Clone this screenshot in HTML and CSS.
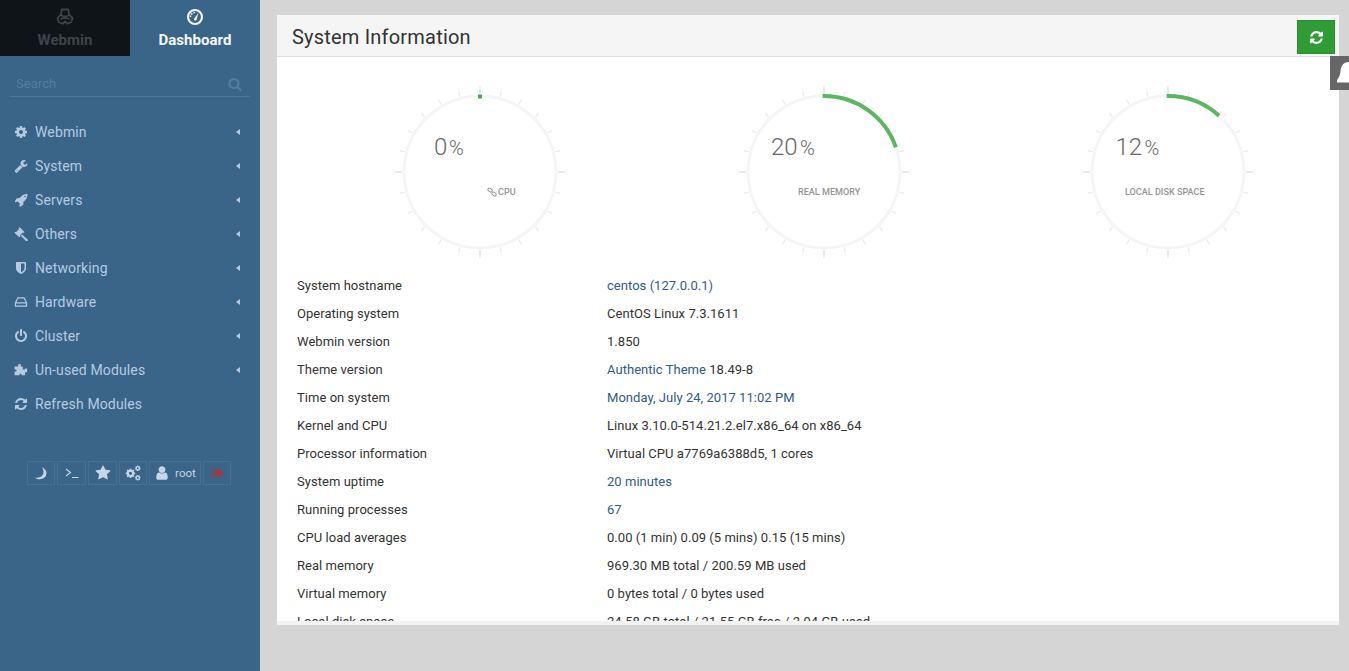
FILE: index.html
```html
<!DOCTYPE html>
<html lang="en">
<head>
<meta charset="utf-8">
<title>System Information</title>
<link rel="stylesheet" href="styles.css">
</head>
<body>
<svg class="defs" aria-hidden="true">
  <symbol id="i-cog" viewBox="0 0 1792 1792"><path d="M1152 896q0-106-75-181t-181-75-181 75-75 181 75 181 181 75 181-75 75-181zm512-109v222q0 12-8 23t-20 13l-185 28q-19 54-39 91 35 50 107 138 10 12 10 25t-9 23q-27 37-99 108t-94 71q-12 0-26-9l-138-108q-44 23-91 38-16 136-29 186-7 28-36 28h-222q-14 0-24.500-8.500t-11.500-21.500l-28-184q-49-16-90-37l-141 107q-10 9-25 9-14 0-25-11-126-114-165-168-7-10-7-23 0-12 8-23 15-21 51-66.500t54-70.500q-27-50-41-99l-183-27q-13-2-21-12.500t-8-23.500v-222q0-12 8-23t19-13l186-28q14-46 39-92-40-57-107-138-10-12-10-24 0-10 9-23 26-36 98.500-107.500t94.500-71.500q13 0 26 10l138 107q44-23 91-38 16-136 29-186 7-28 36-28h222q14 0 24.500 8.500t11.500 21.500l28 184q49 16 90 37l142-107q9-9 24-9 13 0 25 10 129 119 165 170 7 8 7 22 0 12-8 23-15 21-51 66.500t-54 70.500q26 50 41 98l183 28q13 2 21 12.500t8 23.500z"/></symbol>
  <symbol id="i-wrench" viewBox="0 0 1792 1792"><path d="M448 1472q0-26-19-45t-45-19-45 19-19 45 19 45 45 19 45-19 19-45zm644-420l-682 682q-37 37-90 37-52 0-91-37l-106-108q-38-36-38-90 0-53 38-91l681-681q39 98 114.500 173.500t173.500 114.500zm634-435q0 39-23 106-47 134-164.500 217.500t-258.500 83.500q-185 0-316.500-131.500t-131.500-316.500 131.500-316.500 316.500-131.500q58 0 121.500 16.500t107.500 46.500q16 11 16 28t-16 28l-293 169v224l193 107q5-3 79-48.500t135.500-81 70.500-35.500q15 0 23.500 10t8.500 25z"/></symbol>
  <symbol id="i-rocket" viewBox="0 0 1792 1792"><path d="M1504 448q0-40-28-68t-68-28-68 28-28 68 28 68 68 28 68-28 28-68zm224-288q0 249-75.500 430.500t-253.500 360.500q-81 80-195 176l-20 379q-2 16-16 26l-384 224q-7 4-16 4-12 0-23-9l-64-64q-13-14-8-32l85-276-281-281-276 85q-3 1-9 1-14 0-23-9l-64-64q-17-19-5-39l224-384q10-14 26-16l379-20q96-114 176-195 188-187 358-258t431-71q14 0 24 9.500t10 22.500z"/></symbol>
  <symbol id="i-gavel" viewBox="1 1 22 22"><path d="M10 1.500l7.500 7.500-1.700 1.700-.9-.9-4.600 4.600.9.900-1.700 1.700L1.500 10l1.700-1.700.9.900 4.600-4.600-.9-.9zM13.600 12.600l8.700 8.200a1.600 1.600 0 0 1-2.300 2.300l-8.400-8.500z"/></symbol>
  <symbol id="i-shield" viewBox="0 0 1792 1792"><path d="M1344 960v-640h-448v1137q119-63 213-137 235-184 235-360zm192-768v768q0 86-33.500 170.500t-83 150-118 127.500-126.500 103-121 77.500-89.500 49.500-42.500 20q-12 6-26 6t-26-6q-16-7-42.500-20t-89.500-49.500-121-77.500-126.500-103-118-127.500-83-150-33.500-170.500v-768q0-26 19-45t45-19h1152q26 0 45 19t19 45z"/></symbol>
  <symbol id="i-hdd" viewBox="0 0 24 24"><path fill-rule="evenodd" d="M6 4h12l4.500 9v7h-21v-7zm1.200 2L4 12.500h16L16.800 6zM3.500 14.500V18h17v-3.500z"/></symbol>
  <symbol id="i-power" viewBox="0 0 1792 1792"><path d="M1664 896q0 156-61 298t-164 245-245 164-298 61-298-61-245-164-164-245-61-298q0-182 80.500-343t226.500-270q43-32 95.500-25t83.500 50q32 42 24.500 94.500t-49.500 84.500q-98 74-151.500 181t-53.500 228q0 104 40.500 198.500t109.500 163.500 163.500 109.500 198.500 40.500 198.500-40.500 163.500-109.500 109.500-163.500 40.500-198.500q0-121-53.500-228t-151.500-181q-42-32-49.500-84.500t24.500-94.500q31-43 84-50t95 25q146 109 226.500 270t80.500 343zm-640-768v640q0 52-38 90t-90 38-90-38-38-90v-640q0-52 38-90t90-38 90 38 38 90z"/></symbol>
  <symbol id="i-puzzle" viewBox="0 0 24 24"><path d="M7 4a2.500 2.500 0 0 1 5 0c0 .9-.5 1.300-.5 2H15v5h4v-1.500h3.500V16H19v5h-6v-1.500a1.800 1.800 0 0 0-3.500 0V21H1v-6.500h2a1.800 1.800 0 0 0 0-3.500H1V6h6.500C7.500 5.300 7 4.900 7 4z"/></symbol>
  <symbol id="i-refresh" viewBox="0 0 1792 1792"><path d="M1639 1056q0 5-1 7-64 268-268 434.500t-478 166.500q-146 0-282.500-55t-243.500-157l-129 129q-19 19-45 19t-45-19-19-45v-448q0-26 19-45t45-19h448q26 0 45 19t19 45-19 45l-137 137q71 66 161 102t187 36q134 0 250-65t186-179q11-17 53-117 8-23 30-23h192q13 0 22.500 9.500t9.500 22.500zm25-800v448q0 26-19 45t-45 19h-448q-26 0-45-19t-19-45 19-45l138-138q-148-137-349-137-134 0-250 65t-186 179q-11 17-53 117-8 23-30 23h-199q-13 0-22.500-9.500t-9.500-22.500v-7q65-268 270-434.500t480-166.500q146 0 284 55.500t245 156.500l130-129q19-19 45-19t45 19 19 45z"/></symbol>
  <symbol id="i-moon" viewBox="0 0 24 24"><path d="M12.500 1.500C18 6 18 15 10.500 19 7.500 20.500 4 20.500 1.500 19.500 5 23 10.500 24 15.500 21.500 23.500 17.500 24 5.500 12.500 1.500z"/></symbol>
  <symbol id="i-star" viewBox="0 0 1792 1792"><path d="M1728 647q0 22-26 48l-363 354 86 500q1 7 1 20 0 21-10.500 35.500t-30.500 14.500q-19 0-40-12l-449-236-449 236q-22 12-40 12-21 0-31.500-14.500t-10.500-35.500q0-6 2-20l86-500-364-354q-25-27-25-48 0-37 56-46l502-73 225-455q19-41 49-41t49 41l225 455 502 73q56 9 56 46z"/></symbol>
  <symbol id="i-user" viewBox="0 0 1792 1792"><path d="M1536 1399q0 109-62.500 187t-150.500 78h-854q-88 0-150.500-78t-62.500-187q0-85 8.500-160.500t31.500-151.500 58.500-130 94-88.500 134.500-34.500q131 128 313 128t313-128q76 0 134.500 34.500t94 88.500 58.500 130 31.500 151.500 8.500 160.500zm-256-887q0 159-112.500 271.500t-271.500 112.500-271.500-112.500-112.500-271.500 112.500-271.500 271.500-112.500 271.500 112.500 112.500 271.500z"/></symbol>
  <symbol id="i-search" viewBox="0 0 1792 1792"><path d="M1216 832q0-185-131.500-316.500t-316.500-131.500-316.500 131.500-131.500 316.500 131.500 316.500 316.500 131.500 316.500-131.500 131.500-316.500zm512 832q0 52-38 90t-90 38q-54 0-90-38l-343-342q-179 124-399 124-143 0-273.500-55.500t-225-150-150-225-55.500-273.500 55.500-273.500 150-225 225-150 273.500-55.500 273.500 55.500 225 150 150 225 55.500 273.500q0 220-124 399l343 343q37 37 37 90z"/></symbol>
</svg>

<aside class="sidebar">
  <div class="tabs">
    <div class="tab tab-webmin">
      <svg class="tab-icon outline" viewBox="0 0 24 24" stroke="currentColor" stroke-width="2.400" stroke-linejoin="round"><path d="M7.500 2h9l.8 6.500 4.700 5-1.700 5.500-5.300 2-3-3-3 3-5.300-2L2 13.500l4.700-5z"/><path d="M6.700 9.500c3.500 2.500 7 2.500 10.600 0M6 15c4-2.500 8-2.500 12 0"/></svg>
      <span>Webmin</span>
    </div>
    <div class="tab tab-dash">
      <svg class="tab-icon outline" viewBox="0 0 24 24" stroke="currentColor"><circle cx="12" cy="12" r="9.300" stroke-width="2.800"/><path class="solid" d="M10.800 14.200L16.500 6.500l-2.300 8.800a1.800 1.800 0 1 1-3.400-1.100z" stroke="none"/><path d="M6 12a6 6 0 0 1 6-6" stroke-width="1.800" stroke-dasharray="2 1.500"/></svg>
      <span>Dashboard</span>
    </div>
  </div>
  <div class="search">
    <span class="search-text">Search</span>
    <svg class="search-icon"><use href="#i-search"/></svg>
  </div>
  <nav class="menu">
    <div class="item"><svg class="ico"><use href="#i-cog"/></svg><span class="label">Webmin</span><i class="caret"></i></div>
    <div class="item"><svg class="ico"><use href="#i-wrench"/></svg><span class="label">System</span><i class="caret"></i></div>
    <div class="item"><svg class="ico"><use href="#i-rocket"/></svg><span class="label">Servers</span><i class="caret"></i></div>
    <div class="item"><svg class="ico"><use href="#i-gavel"/></svg><span class="label">Others</span><i class="caret"></i></div>
    <div class="item"><svg class="ico"><use href="#i-shield"/></svg><span class="label">Networking</span><i class="caret"></i></div>
    <div class="item"><svg class="ico"><use href="#i-hdd"/></svg><span class="label">Hardware</span><i class="caret"></i></div>
    <div class="item"><svg class="ico"><use href="#i-power"/></svg><span class="label">Cluster</span><i class="caret"></i></div>
    <div class="item"><svg class="ico"><use href="#i-puzzle"/></svg><span class="label">Un-used Modules</span><i class="caret"></i></div>
    <div class="item"><svg class="ico"><use href="#i-refresh"/></svg><span class="label">Refresh Modules</span></div>
  </nav>
  <div class="actions">
    <div class="act w28"><svg class="act-ico"><use href="#i-moon"/></svg></div>
    <div class="act w29"><svg class="act-ico outline" viewBox="0 0 14 14" stroke="currentColor" stroke-width="1.100"><path d="M1 3l4.500 3.500L1 10M7 11.500h6.500"/></svg></div>
    <div class="act w29"><svg class="act-ico big"><use href="#i-star"/></svg></div>
    <div class="act w28"><svg class="act-ico big" viewBox="0 0 22 22"><use href="#i-cog" x="0" y="4" width="15" height="15"/><use href="#i-cog" x="13" y="0" width="9" height="9"/><use href="#i-cog" x="13" y="13" width="9" height="9"/></svg></div>
    <div class="act w52"><svg class="act-ico big"><use href="#i-user"/></svg><span class="root">root</span></div>
    <div class="act w28 logout"><svg class="act-ico" viewBox="0 0 14 14"><path d="M1 2.500h3.500V4H2.500v6h2v1.500H1z" opacity=".6"/><path d="M7.500 2L14 7l-6.500 5V9.300H4V4.700h3.500z"/></svg></div>
  </div>
</aside>

<main class="main">
  <section class="panel">
    <header class="panel-head">
      <h1 class="title">System Information</h1>
      <button class="reload" type="button"><svg class="reload-ico"><use href="#i-refresh"/></svg></button>
    </header>
    <div class="gauges">
      <svg class="gauge" viewBox="0 0 172 176">
        <circle class="minor" cx="86" cy="88" r="80.500" pathLength="240"/>
        <circle class="major" cx="86" cy="88" r="82" pathLength="240"/>
        <circle class="ring" cx="86" cy="88" r="76"/>
        <rect class="dot" x="84" y="10.500" width="4" height="4"/>
        <text class="num" x="40" y="71">0</text><text class="pct" x="55" y="71">%</text>
        <svg class="outline" x="93" y="103" width="10" height="10" viewBox="0 0 10 10" stroke="#999" stroke-width="1"><rect x=".8" y="1.500" width="4.500" height="3" rx="1.400" transform="rotate(40 3 3)"/><rect x="4.800" y="5.500" width="4.500" height="3" rx="1.400" transform="rotate(40 7 7)"/></svg>
        <text class="cap" x="104" y="110.500">CPU</text>
      </svg>
      <svg class="gauge" viewBox="0 0 172 176">
        <circle class="minor" cx="86" cy="88" r="80.500" pathLength="240"/>
        <circle class="major" cx="86" cy="88" r="82" pathLength="240"/>
        <circle class="ring" cx="86" cy="88" r="76"/>
        <circle class="arc" cx="86" cy="88" r="76" pathLength="100" stroke-dasharray="20 80" transform="rotate(-91 86 88)"/>
        <text class="num" x="33" y="71">20</text><text class="pct" x="62" y="71">%</text>
        <text class="cap" x="60" y="110.500">REAL MEMORY</text>
      </svg>
      <svg class="gauge" viewBox="0 0 172 176">
        <circle class="minor" cx="86" cy="88" r="80.500" pathLength="240"/>
        <circle class="major" cx="86" cy="88" r="82" pathLength="240"/>
        <circle class="ring" cx="86" cy="88" r="76"/>
        <circle class="arc" cx="86" cy="88" r="76" pathLength="100" stroke-dasharray="12 88" transform="rotate(-91 86 88)"/>
        <text class="num" x="33.500" y="71">12</text><text class="pct" x="62.500" y="71">%</text>
        <text class="cap" x="43" y="110.500">LOCAL DISK SPACE</text>
      </svg>
    </div>
    <div class="info">
      <div class="row"><span class="key">System hostname</span><a class="link">centos (127.0.0.1)</a></div>
      <div class="row"><span class="key">Operating system</span><span>CentOS Linux 7.3.1611</span></div>
      <div class="row"><span class="key">Webmin version</span><span>1.850</span></div>
      <div class="row"><span class="key">Theme version</span><span><a class="link">Authentic Theme</a> 18.49-8</span></div>
      <div class="row"><span class="key">Time on system</span><a class="link">Monday, July 24, 2017 11:02 PM</a></div>
      <div class="row"><span class="key">Kernel and CPU</span><span>Linux 3.10.0-514.21.2.el7.x86_64 on x86_64</span></div>
      <div class="row"><span class="key">Processor information</span><span>Virtual CPU a7769a6388d5, 1 cores</span></div>
      <div class="row"><span class="key">System uptime</span><a class="link">20 minutes</a></div>
      <div class="row"><span class="key">Running processes</span><a class="link">67</a></div>
      <div class="row"><span class="key">CPU load averages</span><span>0.00 (1 min) 0.09 (5 mins) 0.15 (15 mins)</span></div>
      <div class="row"><span class="key">Real memory</span><span>969.30 MB total / 200.59 MB used</span></div>
      <div class="row"><span class="key">Virtual memory</span><span>0 bytes total / 0 bytes used</span></div>
      <div class="row"><span class="key">Local disk space</span><span>24.58 GB total / 21.55 GB free / 2.94 GB used</span></div>
    </div>
  </section>
  <div class="bell"><svg viewBox="0 0 19 34" class="bell-ico"><path d="M19 6c-6 0-8 4-8.500 9-.4 4-1.500 7-3.500 9v2.500h12z"/></svg></div>
</main>
</body>
</html>
```
FILE: styles.css
```css
* { box-sizing: border-box; }
html, body { height: 100%; }
body {
  margin: 0;
  display: flex;
  height: 671px;
  overflow: hidden;
  background: #d5d5d5;
  font-family: Roboto, "Liberation Sans", sans-serif;
  font-size: 13px;
  letter-spacing: .04px;
  color: #333;
}
.defs { position: absolute; width: 0; height: 0; }
svg { fill: currentColor; }
svg.outline { fill: none; }
.solid { fill: currentColor; }

.sidebar { width: 260px; flex: none; background: #3a6488; color: #b6cbe0; }
.tabs { display: flex; height: 56px; }
.tab { width: 130px; display: flex; flex-direction: column; align-items: center; padding-top: 8px; font-size: 15px; font-weight: 700; }
.tab-webmin { background: #0e1417; color: #3f4447; }
.tab-dash { color: #f4f8fb; }
.tab-icon { width: 18px; height: 18px; margin-bottom: 5px; }

.search { margin: 16px 10px 0; height: 25px; padding: 4px 8px 0 6px; border-bottom: 1px solid #4b769b; display: flex; justify-content: space-between; align-items: flex-start; }
.search-text { color: #527ea3; font-size: 13px; line-height: 15px; }
.search-icon { width: 14px; height: 14px; color: #527ea3; margin-top: 1px; }

.menu { margin-top: 18px; }
.item { height: 34px; display: flex; align-items: center; padding-left: 14px; font-size: 14px; letter-spacing: .13px; }
.ico { width: 14px; height: 14px; flex: none; margin-right: 7px; }
.label { flex: 1; }
.caret { width: 0; height: 0; margin-right: 20px; border: 3px solid transparent; border-left-width: 0; border-right: 4px solid #b6cbe0; }

.actions { display: flex; gap: 2px; margin-top: 40px; padding-left: 27px; }
.act { height: 24px; border: 1px solid #486f94; display: flex; align-items: center; justify-content: center; color: #c5d6e6; }
.w28 { width: 28px; }
.w29 { width: 29px; }
.w52 { width: 52px; gap: 5px; }
.act-ico { width: 14px; height: 14px; }
.act-ico.big { width: 16px; height: 16px; }
.root { font-size: 11.500px; }
.logout { color: #a5373f; }

.main { flex: 1; min-width: 0; padding: 15px 10px 0 17px; position: relative; }
.panel { height: 610px; background: #fff; border-bottom: 4px solid #f2f2f2; overflow: hidden; }
.panel-head { height: 42px; background: #f5f5f5; border-bottom: 1px solid #dedede; display: flex; align-items: center; justify-content: space-between; padding: 3px 4px 0 15px; }
.title { margin: 0; font-size: 20px; font-weight: 400; color: #333; letter-spacing: .2px; }
.reload { width: 38px; height: 34px; background: #2f9c36; border: 1px solid #2b8f32; padding: 0; display: flex; align-items: center; justify-content: center; color: #fff; }
.reload-ico { width: 15px; height: 15px; }

.gauges { display: flex; height: 214px; padding-left: 30.500px; }
.gauge { width: 172px; height: 176px; margin: 27px 86px 0; flex: none; overflow: visible; }
.minor, .major, .ring, .arc { fill: none; }
.minor { stroke: #e8e8e8; stroke-width: 5; stroke-dasharray: .5 9.500; stroke-dashoffset: .25; }
.major { stroke: #e0e0e0; stroke-width: 8; stroke-dasharray: .5 59.500; stroke-dashoffset: .25; }
.ring { stroke: #f5f5f5; stroke-width: 3; }
.arc { stroke: #5cb560; stroke-width: 4; }
.dot { fill: #4ca654; }
.num { font-size: 24px; font-weight: 300; fill: #666; }
.pct { font-size: 20px; font-weight: 300; fill: #666; }
.cap { font-size: 9px; font-weight: 500; fill: #949494; }

.info { padding-left: 20px; }
.row { height: 28px; display: flex; align-items: center; color: #333; }
.key { width: 310px; flex: none; }
.link { color: #2f5b87; }

.bell { position: absolute; right: 0; top: 56px; width: 19px; height: 34px; background: #666; overflow: hidden; }
.bell-ico { width: 19px; height: 34px; fill: #fff; display: block; }
```
